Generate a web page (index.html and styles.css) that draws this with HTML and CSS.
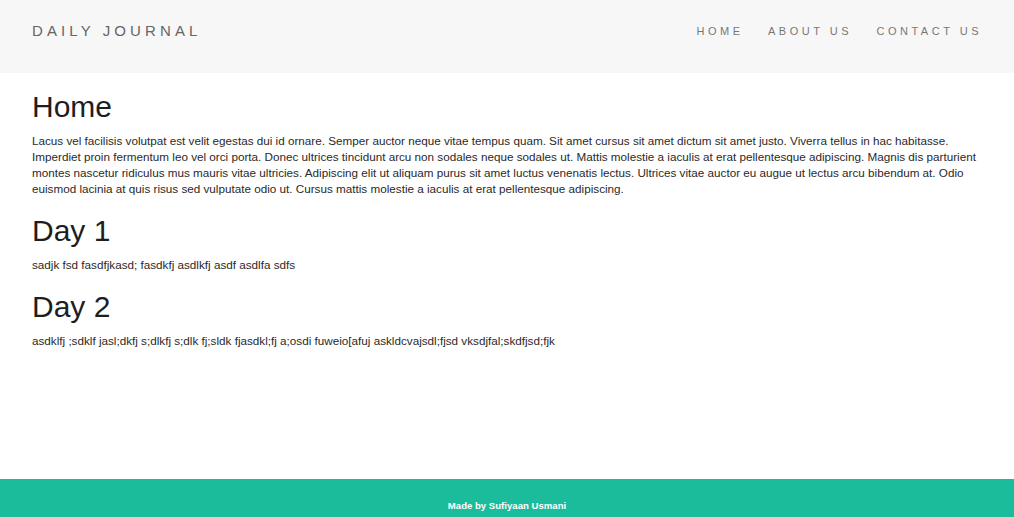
FILE: index.html
```html
<!DOCTYPE html>
<html>
<head>
<meta charset="utf-8">
<title>Daily Journal</title>
<link rel="stylesheet" href="styles.css">
</head>
<body>
<header class="navbar">
  <div class="brand">DAILY JOURNAL</div>
  <nav class="nav">
    <a class="nav-link" href="#">HOME</a>
    <a class="nav-link" href="#">ABOUT US</a>
    <a class="nav-link" href="#">CONTACT US</a>
  </nav>
</header>
<main class="content">
  <h1 class="title">Home</h1>
  <p class="text">Lacus vel facilisis volutpat est velit egestas dui id ornare. Semper auctor neque vitae tempus quam. Sit amet cursus sit amet dictum sit amet justo. Viverra tellus in hac habitasse. Imperdiet proin fermentum leo vel orci porta. Donec ultrices tincidunt arcu non sodales neque sodales ut. Mattis molestie a iaculis at erat pellentesque adipiscing. Magnis dis parturient montes nascetur ridiculus mus mauris vitae ultricies. Adipiscing elit ut aliquam purus sit amet luctus venenatis lectus. Ultrices vitae auctor eu augue ut lectus arcu bibendum at. Odio euismod lacinia at quis risus sed vulputate odio ut. Cursus mattis molestie a iaculis at erat pellentesque adipiscing.</p>
  <h1 class="title">Day 1</h1>
  <p class="text">sadjk fsd fasdfjkasd; fasdkfj asdlkfj asdf asdlfa sdfs</p>
  <h1 class="title">Day 2</h1>
  <p class="text">asdklfj ;sdklf jasl;dkfj s;dlkfj s;dlk fj;sldk fjasdkl;fj a;osdi fuweio[afuj askldcvajsdl;fjsd vksdjfal;skdfjsd;fjk</p>
</main>
<footer class="footer">Made by Sufiyaan Usmani</footer>
</body>
</html>
```
FILE: styles.css
```css
html, body {
  margin: 0;
  padding: 0;
  height: 100%;
}
body {
  display: flex;
  flex-direction: column;
  font-family: "Liberation Sans", Arial, sans-serif;
  background: #ffffff;
  color: #333;
}
.navbar {
  height: 73px;
  background: #f7f7f7;
  display: flex;
  align-items: flex-start;
  justify-content: space-between;
  padding: 0 32px;
  box-sizing: border-box;
}
.brand {
  margin-top: 22px;
  font-size: 15px;
  line-height: 18px;
  letter-spacing: 4.1px;
  color: #666;
}
.nav {
  display: flex;
  gap: 24.5px;
  margin-top: 24px;
}
.nav-link {
  font-size: 11px;
  line-height: 14px;
  letter-spacing: 3.5px;
  color: #777;
  text-decoration: none;
}
.content {
  flex: 1;
  padding: 0 32px;
}
.title {
  margin: 16px 0 8px;
  font-size: 30px;
  line-height: 36px;
  font-weight: 400;
  color: #1e1e1e;
}
.text {
  margin: 0;
  font-size: 11.7px;
  line-height: 16px;
  color: #2a2a2a;
}
.footer {
  height: 38px;
  box-sizing: border-box;
  padding-top: 21px;
  background: #1abc9c;
  color: #fff;
  text-align: center;
  font-size: 9.6px;
  line-height: 12px;
  font-weight: 700;
}
```
